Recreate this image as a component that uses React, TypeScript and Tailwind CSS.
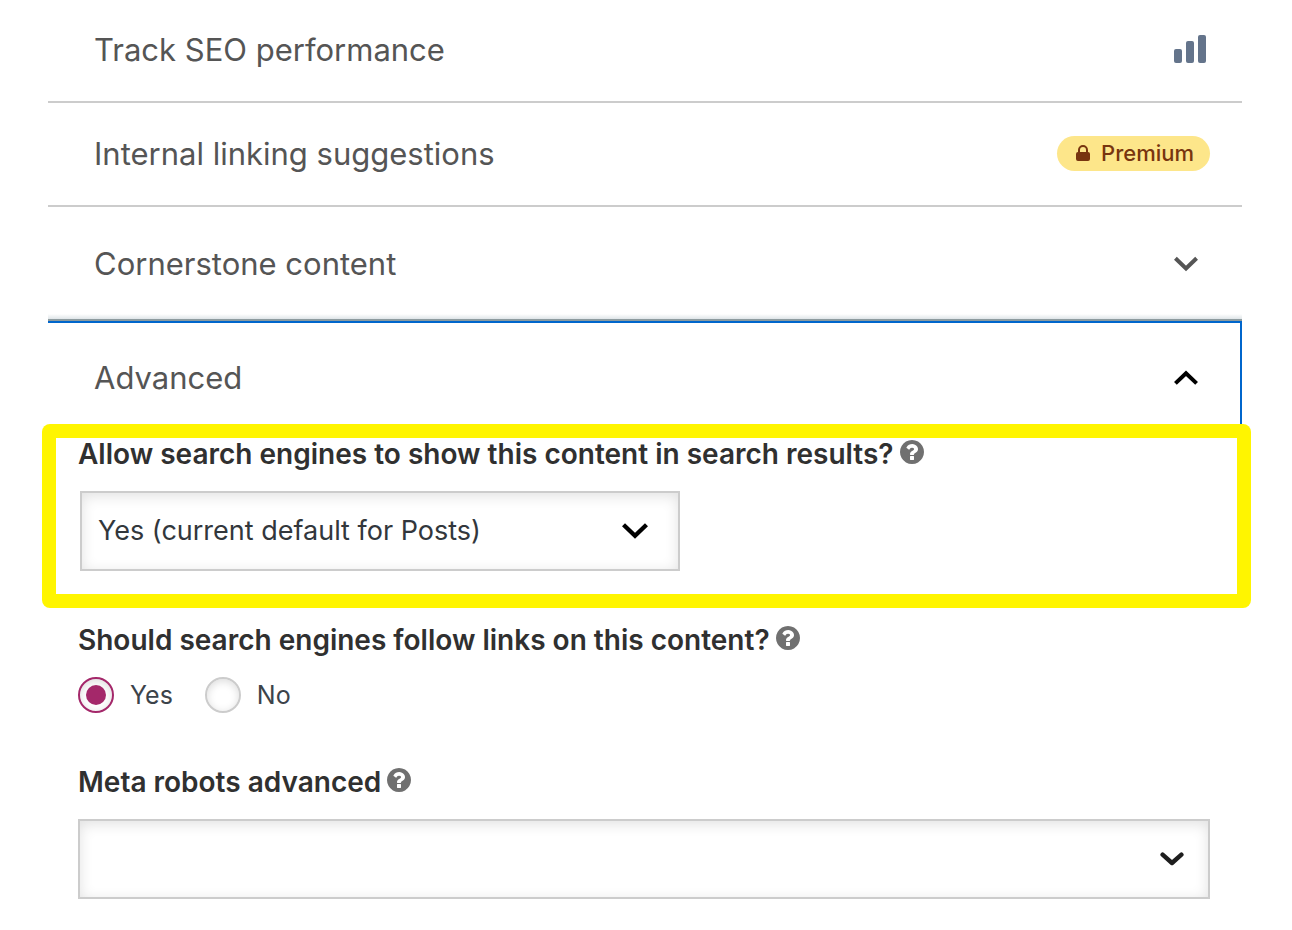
import { useState } from "react";
import type { ReactNode } from "react";

function Chevron({ up = false, className = "h-4 w-6" }: { up?: boolean; className?: string }) {
  return (
    <svg viewBox="0 0 24 16" className={`shrink-0 ${className}`} fill="none" stroke="currentColor" strokeWidth="4" aria-hidden="true">
      <path d={up ? "M1.4 13.4 12 3.2 22.6 13.4" : "M1.4 2.2 12 12.4 22.6 2.2"} />
    </svg>
  );
}

function BarsIcon() {
  return (
    <svg viewBox="0 0 32 28" className="mr-1 mb-1 h-7 w-8" fill="#64748b" aria-hidden="true">
      <rect x="0" y="14" width="8" height="14" rx="2" />
      <rect x="12" y="6" width="8" height="22" rx="2" />
      <rect x="24" y="0" width="8" height="28" rx="2" />
    </svg>
  );
}

function PremiumBadge() {
  return (
    <span className="mb-0.5 flex h-[35px] items-center gap-2 rounded-full bg-[#fde68a] px-4 text-[22px] font-medium text-[#78350f]">
      <svg viewBox="0 0 20 20" className="h-5 w-5" fill="currentColor" aria-hidden="true">
        <path fillRule="evenodd" clipRule="evenodd" d="M5 9V7a5 5 0 0110 0v2a2 2 0 012 2v5a2 2 0 01-2 2H5a2 2 0 01-2-2v-5a2 2 0 012-2zm8-2v2H7V7a3 3 0 016 0z" />
      </svg>
      Premium
    </span>
  );
}

function Row({ title, children, className, onClick, expanded }: { title: string; children: ReactNode; className: string; onClick?: () => void; expanded?: boolean }) {
  return (
    <button type="button" onClick={onClick} aria-expanded={expanded} className={`flex w-full items-center justify-between pr-8 pl-[46px] text-left text-[31px] text-[#555] outline-none ${className}`}>
      <span>{title}</span>
      {children}
    </button>
  );
}

function Help({ topic }: { topic: string }) {
  return (
    <a href="#help" aria-label={`Learn more about ${topic}`} className="pb-1 text-[#707070]">
      <svg viewBox="128 128 1536 1536" className="h-6 w-6" fill="currentColor" aria-hidden="true">
        <path d="M1024 1376v-192q0-14-9-23t-23-9h-192q-14 0-23 9t-9 23v192q0 14 9 23t23 9h192q14 0 23-9t9-23zm256-672q0-88-55.5-163t-138.5-116-170-41q-243 0-371 213-15 24 8 42l132 100q7 6 19 6 16 0 25-12 53-68 86-92 34-24 86-24 48 0 85.5 26t37.5 59q0 38-20 61t-68 45q-63 28-115.5 86.5t-52.5 125.5v36q0 14 9 23t23 9h192q14 0 23-9t9-23q0-19 21.5-49.5t54.5-49.5q32-18 49-28.5t46-35 44.5-48 28-60.5 12.5-81zm384 192q0 209-103 385.5t-279.5 279.5-385.5 103-385.5-103-279.5-279.5-103-385.5 103-385.5 279.5-279.5 385.5-103 385.5 103 279.5 279.5 103 385.5z" />
      </svg>
    </a>
  );
}

const labelText = "text-[28px] leading-10 font-semibold text-[#303030]";
const field = "h-20 w-full appearance-none border-2 border-[#ccc] bg-white pl-4 text-[27px] text-[#32373c] shadow-[inset_0_3px_14px_rgba(0,0,0,0.12)] outline-none";

function Radio({ label, value, current, onChange }: { label: string; value: string; current: string; onChange: (v: string) => void }) {
  return (
    <label className="flex items-center gap-4 text-[25px] leading-9 text-[#3c434a]">
      <input
        type="radio"
        name="follow"
        value={value}
        checked={current === value}
        onChange={() => onChange(value)}
        className="grid h-9 w-9 appearance-none place-items-center rounded-full border-2 border-[#ccc] bg-white shadow-[inset_0_2px_8px_rgba(0,0,0,0.14)] before:h-5 before:w-5 before:rounded-full checked:border-[#a4286a] checked:before:bg-[#a4286a]"
      />
      {label}
    </label>
  );
}

export default function App() {
  const [follow, setFollow] = useState("yes");
  const [open, setOpen] = useState(true);

  return (
    <main className="bg-white pr-[50px] pb-7 pl-12 font-['Inter','Liberation_Sans',sans-serif]">
      <Row title="Track SEO performance" className="h-[103px] border-b-2 border-[#ccc]">
        <BarsIcon />
      </Row>
      <Row title="Internal linking suggestions" className="h-[104px] border-b-2 border-[#ccc]">
        <PremiumBadge />
      </Row>
      <Row title="Cornerstone content" expanded={false} className="h-[114px] bg-[linear-gradient(to_top,#8d9b9f_0,#8d9b9f_2px,#dfe5e8_2px,#ffffff_7px)]">
        <Chevron className="mr-3 h-4 w-6" />
      </Row>
      <Row title="Advanced" expanded={open} onClick={() => setOpen(!open)} className="h-[113px] border-t-2 border-r-2 border-[#0066cc]">
        <Chevron up className="mr-[10px] mb-0.5 h-4 w-6 text-black" />
      </Row>

      {open && (
        <form className="pr-8 pl-[30px]">
          <div className="relative">
            <div className="pointer-events-none absolute -top-[10px] -right-[41px] -bottom-[37px] -left-9 rounded-lg bg-[#fff500] p-[14px]">
              <div className="h-full bg-white" />
            </div>
            <div className="relative">
              <div className="flex items-center gap-1.5">
                <label htmlFor="noindex" className={labelText}>
                  Allow search engines to show this content in search results?
                </label>
                <Help topic="showing content in search results" />
              </div>
              <div className="mt-[17px] ml-0.5 grid max-w-[600px] items-center">
                <select id="noindex" defaultValue="default" className={`col-start-1 row-start-1 ${field}`}>
                  <option value="default">Yes (current default for Posts)</option>
                  <option value="yes">Yes</option>
                  <option value="no">No</option>
                </select>
                <Chevron className="pointer-events-none col-start-1 row-start-1 mr-8 h-[18px] w-[26px] justify-self-end text-black" />
              </div>
            </div>
          </div>

          <fieldset className="mt-[49px]">
            <div className="flex items-center gap-1.5">
              <legend className={labelText}>Should search engines follow links on this content?</legend>
              <Help topic="following links" />
            </div>
            <div className="mt-[17px] flex gap-8">
              <Radio label="Yes" value="yes" current={follow} onChange={setFollow} />
              <Radio label="No" value="no" current={follow} onChange={setFollow} />
            </div>
          </fieldset>

          <div className="mt-[49px]">
            <div className="flex items-center gap-1.5">
              <label htmlFor="robots" className={labelText}>
                Meta robots advanced
              </label>
              <Help topic="advanced meta robots" />
            </div>
            <div className="mt-[17px] grid items-center">
              <select id="robots" defaultValue="" className={`col-start-1 row-start-1 ${field}`}>
                <option value=""></option>
                <option value="noimageindex">No Image Index</option>
                <option value="noarchive">No Archive</option>
                <option value="nosnippet">No Snippet</option>
              </select>
              <svg viewBox="0 0 24 16" className="pointer-events-none col-start-1 row-start-1 mr-[26px] h-4 w-6 justify-self-end" fill="none" stroke="#1e1e1e" strokeWidth="4.4" strokeLinecap="round" strokeLinejoin="round" aria-hidden="true">
                <path d="M2.6 3.6 12 12 21.4 3.6" />
              </svg>
            </div>
          </div>
        </form>
      )}
    </main>
  );
}
